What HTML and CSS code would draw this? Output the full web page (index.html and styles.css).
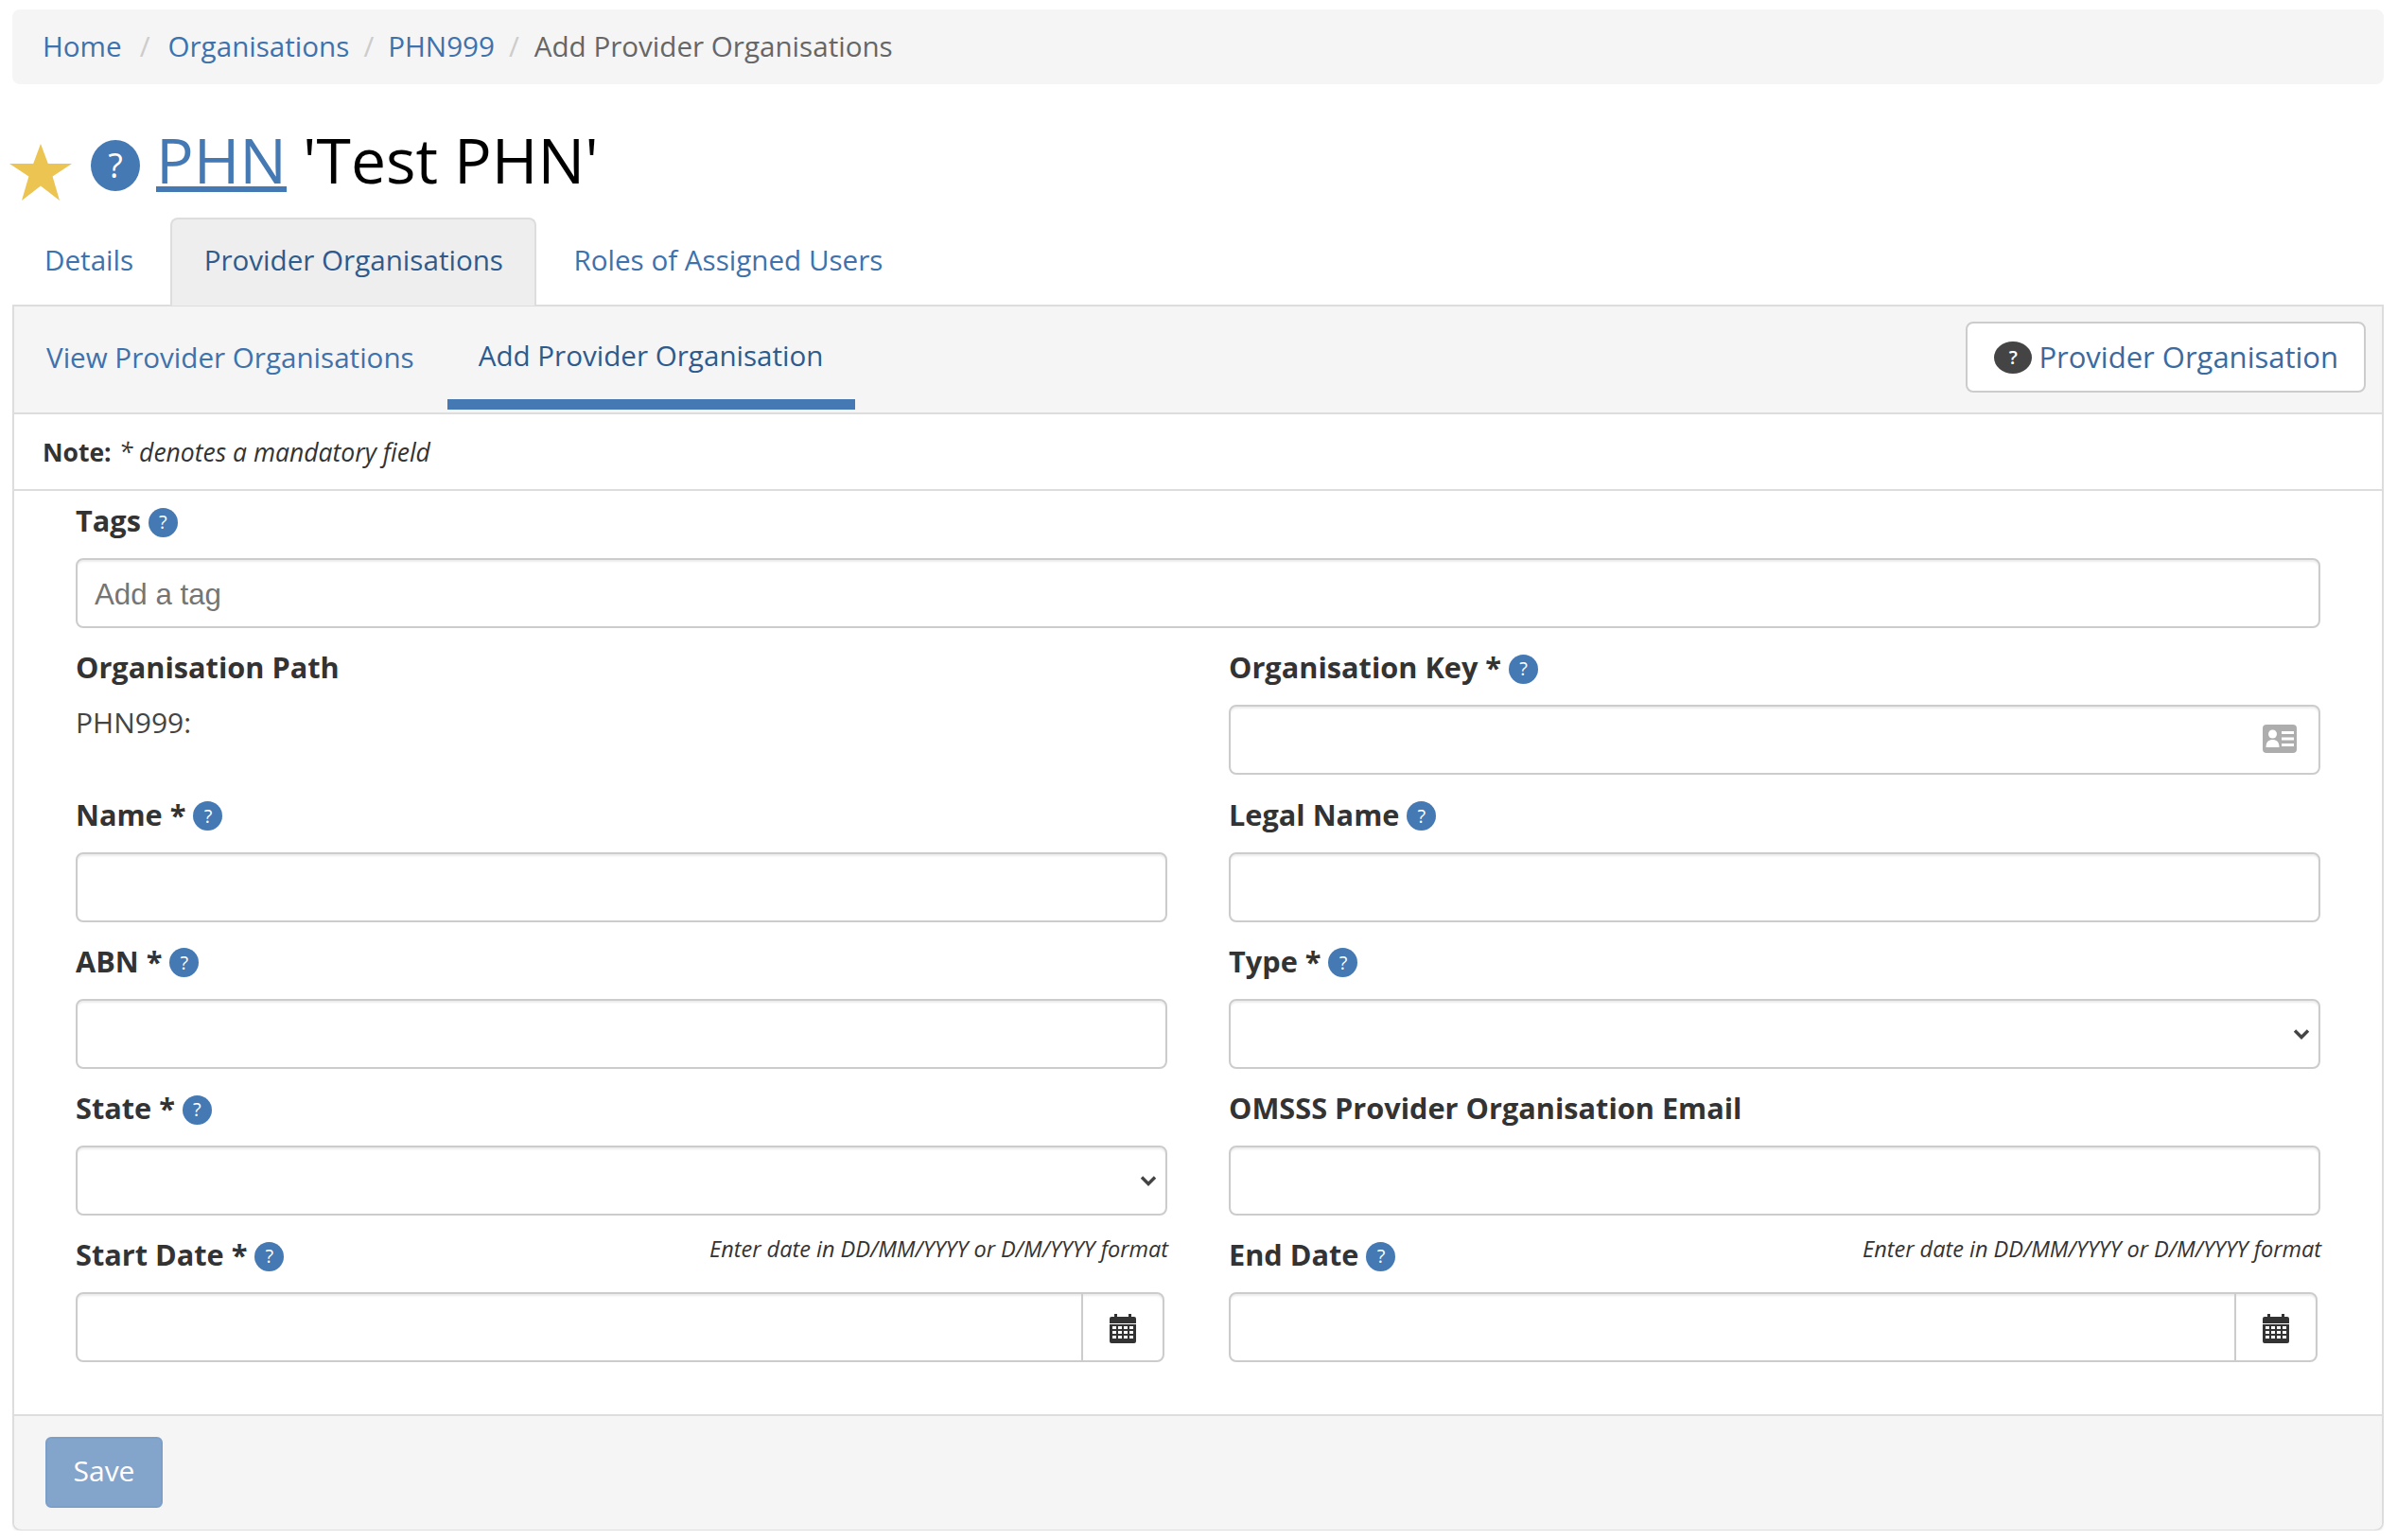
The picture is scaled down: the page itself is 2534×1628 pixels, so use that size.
FILE: index.html
```html
<!DOCTYPE html>
<html lang="en">
<head>
<meta charset="utf-8">
<title>Add Provider Organisations</title>
<link rel="stylesheet" href="styles.css">
</head>
<body>
<svg class="defs" width="0" height="0" aria-hidden="true">
  <defs>
    <symbol id="cal" viewBox="0 0 28 31">
      <path fill="#333" d="M2 3h3V0h3v3h12V0h3v3h3a2 2 0 0 1 2 2v5H0V5a2 2 0 0 1 2-2zM0 11h28v18a2 2 0 0 1-2 2H2a2 2 0 0 1-2-2z"/>
      <path fill="#fff" d="M3 13h4v3H3zM9 13h4v3H9zM15 13h4v3h-4zM21 13h4v3h-4zM3 18h4v3H3zM9 18h4v3H9zM15 18h4v3h-4zM21 18h4v3h-4zM3 23h4v3H3zM9 23h4v3H9zM15 23h4v3h-4zM21 23h4v3h-4z"/>
    </symbol>
    <symbol id="chev" viewBox="0 0 18 12">
      <path fill="none" stroke="#444" stroke-width="3.4" d="M2 2.500l7 7 7-7"/>
    </symbol>
  </defs>
</svg>

<nav class="crumbs">
  <a href="#">Home</a><span class="sep sep-first">/</span>
  <a href="#">Organisations</a><span class="sep">/</span>
  <a href="#">PHN999</a><span class="sep">/</span>
  <span class="current">Add Provider Organisations</span>
</nav>

<h1 class="title">
  <svg class="star" viewBox="0 0 66 60"><path fill="#ecc452" d="M33 0l7.800 21H66L45.600 34.600 53 60 33 44.500 13 60l7.400-25.400L0 21h25.200z"/></svg>
  <span class="help help-lg">?</span>
  <a href="#">PHN</a>
  <span>'Test PHN'</span>
</h1>

<ul class="tabs">
  <li class="tab"><a href="#">Details</a></li>
  <li class="tab tab-active"><a href="#">Provider Organisations</a></li>
  <li class="tab"><a href="#">Roles of Assigned Users</a></li>
</ul>

<section class="panel">
  <header class="panel-head">
    <a class="sub-tab sub-tab-low" href="#">View Provider Organisations</a>
    <a class="sub-tab sub-tab-active" href="#">Add Provider Organisation</a>
    <a class="help-btn" href="#"><span class="help-dark">?</span>Provider Organisation</a>
  </header>
  <p class="note"><b>Note:</b> <i>* denotes a mandatory field</i></p>
  <form class="form">
    <div class="field field-wide">
      <div class="label"><b>Tags</b><span class="help">?</span></div>
      <input class="control control-tag" type="text" placeholder="Add a tag">
    </div>
    <div class="field">
      <div class="label"><b>Organisation Path</b></div>
      <div class="static">PHN999:</div>
    </div>
    <div class="field">
      <div class="label"><b>Organisation Key *</b><span class="help">?</span></div>
      <div class="wrap">
        <input class="control" type="text">
        <svg class="id-icon" viewBox="0 0 36 30"><rect width="36" height="30" rx="4" fill="#adadad"/><circle cx="10.500" cy="10" r="4.500" fill="#fff"/><path fill="#fff" d="M3.500 24c0-6 3-8 7-8s7 2 7 8z"/><path fill="#fff" d="M20 7h13v3H20zM20 13.500h13v3H20zM20 20h13v3H20z"/></svg>
      </div>
    </div>
    <div class="field">
      <div class="label"><b>Name *</b><span class="help">?</span></div>
      <input class="control" type="text">
    </div>
    <div class="field">
      <div class="label"><b>Legal Name</b><span class="help">?</span></div>
      <input class="control" type="text">
    </div>
    <div class="field">
      <div class="label"><b>ABN *</b><span class="help">?</span></div>
      <input class="control" type="text">
    </div>
    <div class="field">
      <div class="label"><b>Type *</b><span class="help">?</span></div>
      <div class="wrap">
        <select class="control control-select"><option></option></select>
        <svg class="chev"><use href="#chev"/></svg>
      </div>
    </div>
    <div class="field">
      <div class="label"><b>State *</b><span class="help">?</span></div>
      <div class="wrap">
        <select class="control control-select"><option></option></select>
        <svg class="chev"><use href="#chev"/></svg>
      </div>
    </div>
    <div class="field">
      <div class="label"><b>OMSSS Provider Organisation Email</b></div>
      <input class="control" type="text">
    </div>
    <div class="field">
      <div class="label"><b>Start Date *</b><span class="help">?</span><em class="hint">Enter date in DD/MM/YYYY or D/M/YYYY format</em></div>
      <div class="date">
        <input class="date-input" type="text">
        <span class="date-btn"><svg class="cal"><use href="#cal"/></svg></span>
      </div>
    </div>
    <div class="field">
      <div class="label"><b>End Date</b><span class="help">?</span><em class="hint">Enter date in DD/MM/YYYY or D/M/YYYY format</em></div>
      <div class="date">
        <input class="date-input" type="text">
        <span class="date-btn"><svg class="cal"><use href="#cal"/></svg></span>
      </div>
    </div>
  </form>
  <footer class="panel-foot">
    <button class="save" type="button">Save</button>
  </footer>
</section>
</body>
</html>
```
FILE: styles.css
```css
* { box-sizing: border-box; }
html, body { margin: 0; background: #fff; }
body {
  padding: 10px 14px 0 13px;
  font-family: "Open Sans", sans-serif;
  font-size: 29.600px;
  color: #333;
}
a { color: #3e72ad; text-decoration: none; }
.defs { position: absolute; }

.crumbs {
  display: flex;
  align-items: center;
  height: 79px;
  padding: 0 0 2px 32px;
  background: #f5f5f5;
  border-radius: 8px;
  white-space: pre;
}
.crumbs a { color: #3e72ad; }
.sep { color: #ccc; margin: 0 15px; }
.sep-first { margin: 0 19px; }
.current { color: #666; margin-left: 1px; }

.title {
  display: flex;
  align-items: center;
  height: 141px;
  margin: 0 0 0 -4px;
  padding-top: 17px;
  font-size: 66px;
  font-weight: 400;
  color: #000;
  white-space: pre;
}
.title a { color: #4479b3; text-decoration: underline; text-decoration-thickness: 6px; margin: 0 17px 0 17px; }
.star { width: 66px; height: 60px; margin-top: 27px; margin-left: 1px; }

.help {
  display: inline-flex;
  align-items: center;
  justify-content: center;
  width: 31px;
  height: 31px;
  margin: 4px 0 0 8px;
  border-radius: 50%;
  background: #4479b3;
  color: #fff;
  font-size: 20px;
  font-weight: 400;
  line-height: 1;
}
.help-lg { width: 52px; height: 54px; margin: 14px 0 0 20px; font-size: 36px; }

.tabs {
  display: flex;
  gap: 4px;
  height: 93px;
  margin: 0;
  padding: 0;
  list-style: none;
}
.tab {
  display: flex;
  align-items: center;
  padding: 0 33.500px 6px;
  border: 2px solid transparent;
  border-bottom: 0;
  border-radius: 8px 8px 0 0;
}
.tab:first-child { padding-left: 32px; padding-right: 33px; }
.tab:last-child { padding-left: 33px; }
.tab a { color: #3e72ad; }
.tab-active { background: #eee; border-color: #ddd; }
.tab-active a { color: #2f5a8c; }

.panel {
  border: 2px solid #ddd;
  border-radius: 0 0 8px 8px;
  box-shadow: 0 2px 2px rgba(0, 0, 0, .05);
  margin-top: -1px;
  height: 1296px;
}
.panel-head {
  display: flex;
  align-items: stretch;
  gap: 2px;
  height: 114px;
  padding: 0 17px 3px 1px;
  background: #f5f5f5;
  border-bottom: 2px solid #ddd;
}
.sub-tab {
  display: flex;
  align-items: center;
  padding: 4px 33px 0;
  border-bottom: 11px solid transparent;
  color: #3e72ad;
}
.sub-tab-low { padding-top: 8px; }
.sub-tab-active { color: #2f5a8c; border-bottom-color: #4479b3; }
.help-btn {
  display: flex;
  align-items: center;
  height: 75px;
  margin: 16px 0 0 auto;
  padding: 0 27px 2px 28px;
  background: #fff;
  border: 2px solid #ccc;
  border-radius: 8px;
  color: #3a6a9f;
  font-size: 31px;
}
.help-dark {
  display: inline-flex;
  align-items: center;
  justify-content: center;
  width: 40px;
  height: 34px;
  margin: 2px 7px 0 0;
  border-radius: 50%;
  background: #444;
  color: #fff;
  font-size: 20px;
  font-weight: 600;
}

.note {
  display: flex;
  align-items: center;
  gap: 8px;
  height: 81px;
  margin: 0;
  padding-left: 30px;
  border-bottom: 2px solid #ddd;
  font-size: 26.500px;
}
.note i { color: #333; }

.form {
  display: grid;
  grid-template-columns: 1fr 1fr;
  column-gap: 65px;
  padding: 11px 65px 33px;
  height: 976px;
  align-content: start;
}
.field { height: 155.250px; min-width: 0; }
.field-wide { grid-column: 1 / -1; }
.label {
  display: flex;
  align-items: center;
  height: 40px;
  margin-bottom: 20px;
  font-size: 30.700px;
  color: #333;
}
.hint { align-self: flex-start; margin: -2px -1px 0 auto; font-size: 23.500px; color: #333; }
.static { line-height: 38px; font-size: 30px; color: #444; margin-top: 5px; }

.wrap { position: relative; }
.control {
  display: block;
  width: 100%;
  height: 74px;
  padding: 4px 18px 0;
  background: #fff;
  border: 2px solid #ccc;
  border-radius: 8px;
  box-shadow: inset 0 2px 2px rgba(0, 0, 0, .075);
  font-family: "Liberation Sans", sans-serif;
  font-size: 31.300px;
  color: #555;
  appearance: none;
}
.control-tag::placeholder { color: #757575; opacity: 1; }
.chev { position: absolute; right: 11px; top: 31px; width: 18px; height: 12px; pointer-events: none; }
.id-icon { position: absolute; right: 25px; top: 21px; width: 36px; height: 30px; }

.date {
  display: flex;
  height: 74px;
  margin-right: 3px;
  border: 2px solid #ccc;
  border-radius: 8px;
  box-shadow: inset 0 2px 2px rgba(0, 0, 0, .075);
}
.date-input { flex: 1; min-width: 0; border: 0; background: transparent; outline: 0; }
.date-btn {
  display: flex;
  align-items: center;
  justify-content: center;
  width: 86px;
  border-left: 2px solid #ccc;
}
.cal { width: 28px; height: 31px; margin-top: 2px; }

.panel-foot {
  display: flex;
  align-items: center;
  height: 122px;
  padding: 0 33px 1px;
  background: #f5f5f5;
  border-top: 2px solid #ddd;
  border-radius: 0 0 8px 8px;
}
.save {
  width: 124px;
  height: 75px;
  padding: 0 0 4px;
  background: #84a5cb;
  border: 2px solid #7c9fc7;
  border-radius: 6px;
  color: #fff;
  font-family: "Open Sans", sans-serif;
  font-size: 30px;
}
```
